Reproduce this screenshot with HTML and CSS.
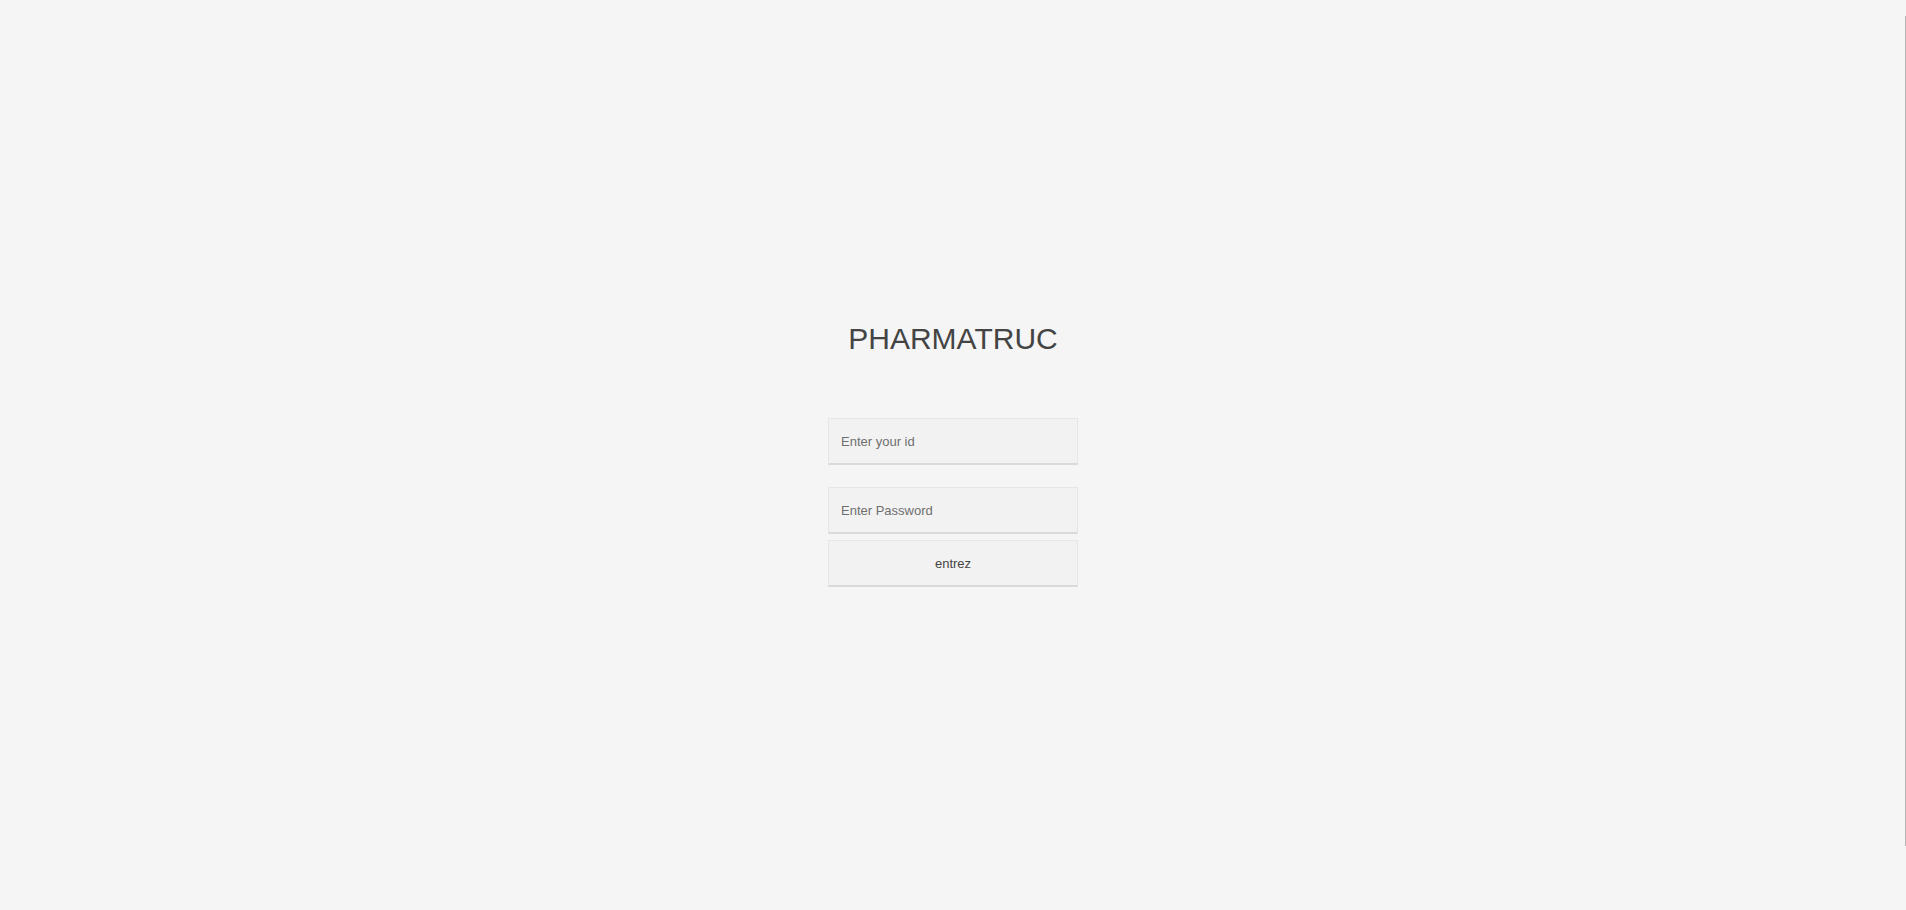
FILE: index.html
```html
<!DOCTYPE html>
<html lang="fr">
<head>
<meta charset="utf-8">
<title>PHARMATRUC</title>
<link rel="stylesheet" href="styles.css">
</head>
<body>
<main class="login">
  <h1 class="brand">PHARMATRUC</h1>
  <form class="login-form">
    <input class="field field-id" type="text" placeholder="Enter your id">
    <input class="field field-pass" type="password" placeholder="Enter Password">
    <button class="submit" type="button">entrez</button>
  </form>
</main>
<div class="scroll-edge"></div>
</body>
</html>
```
FILE: styles.css
```css
html, body {
  margin: 0;
  padding: 0;
  height: 100%;
}
body {
  background: #f5f5f5;
  font-family: "Liberation Sans", Arial, sans-serif;
  color: #444;
  overflow: hidden;
}
.login {
  display: flex;
  flex-direction: column;
  align-items: center;
  padding-top: 321px;
}
.brand {
  margin: 0;
  font-size: 30px;
  line-height: 36px;
  font-weight: normal;
  color: #444;
}
.login-form {
  display: flex;
  flex-direction: column;
  width: 250px;
  margin-top: 61px;
}
.field, .submit {
  box-sizing: border-box;
  width: 250px;
  height: 47px;
  margin: 0;
  background: #f2f2f2;
  border: 1px solid #e6e6e6;
  border-bottom: 2px solid #dadada;
  font-family: "Liberation Sans", Arial, sans-serif;
  font-size: 13px;
  color: #444;
  outline: none;
  border-radius: 0;
}
.field {
  padding: 0 12px;
}
.field::placeholder {
  color: #6f6f6f;
}
.field-pass {
  margin-top: 22px;
}
.submit {
  margin-top: 6px;
  text-align: center;
  cursor: pointer;
}
.scroll-edge {
  position: fixed;
  top: 16px;
  right: 0;
  width: 1px;
  height: 830px;
  background: #b5b5b5;
}
```
